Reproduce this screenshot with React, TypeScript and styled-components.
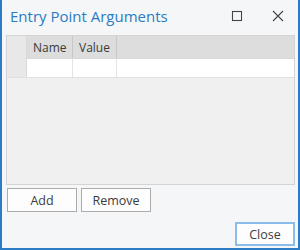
import { createGlobalStyle, styled } from 'styled-components';

const GlobalStyle = createGlobalStyle`
    html, body {
        margin: 0;
        padding: 0;
        background: #f5f6f7;
    }
    * {
        box-sizing: border-box;
    }
`;

const columns = [
    { label: 'Name', width: 46 },
    { label: 'Value', width: 44 },
];

export default function App() {
    return (
        <>
            <GlobalStyle />
            <Window>
                <TitleBar>
                    <Title>Entry Point Arguments</Title>
                    <Controls>
                        <ControlButton aria-label="Maximize">
                            <svg width="12" height="12" viewBox="0 0 12 12">
                                <rect x="1.5" y="1.5" width="9" height="9" fill="none" stroke="#444" strokeWidth="1.1" />
                            </svg>
                        </ControlButton>
                        <ControlButton aria-label="Close">
                            <svg width="12" height="12" viewBox="0 0 12 12">
                                <path d="M1 1 L11 11 M11 1 L1 11" stroke="#444" strokeWidth="1.1" />
                            </svg>
                        </ControlButton>
                    </Controls>
                </TitleBar>
                <Grid>
                    <HeaderRow>
                        <RowHeader />
                        {columns.map((col) => (
                            <HeaderCell key={col.label} $width={col.width}>
                                {col.label}
                            </HeaderCell>
                        ))}
                        <HeaderFill />
                    </HeaderRow>
                    <DataRow>
                        <RowHeader />
                        {columns.map((col) => (
                            <DataCell key={col.label} $width={col.width} />
                        ))}
                        <DataFill />
                    </DataRow>
                </Grid>
                <ButtonRow>
                    <Button>Add</Button>
                    <Button>Remove</Button>
                </ButtonRow>
                <Footer>
                    <Button $primary>Close</Button>
                </Footer>
            </Window>
        </>
    );
}

const Window = styled.div`
    width: 300px;
    height: 250px;
    display: flex;
    flex-direction: column;
    background: #f5f6f7;
    border-left: 2px solid #2b7cc4;
    border-right: 2px solid #2b7cc4;
    border-bottom: 2px solid #2b7cc4;
    padding: 0 3px 0 4px;
    font-family: 'Open Sans', 'Noto Sans', sans-serif;
`;

const TitleBar = styled.div`
    height: 35px;
    display: flex;
    align-items: center;
    justify-content: space-between;
    padding: 0 0 3px 4px;
`;

const Title = styled.h1`
    margin: 0;
    font-size: 15px;
    font-weight: 400;
    color: #2a7bc3;
`;

const Controls = styled.div`
    display: flex;
    align-items: center;
    gap: 27px;
    padding-right: 10px;
`;

const ControlButton = styled.div`
    width: 14px;
    height: 14px;
    display: flex;
    align-items: center;
    justify-content: center;
`;

const Grid = styled.div`
    height: 150px;
    background: #f0f0f0;
    border: 1px solid #d4d4d4;
    display: flex;
    flex-direction: column;
`;

const HeaderRow = styled.div`
    display: flex;
    height: 22px;
    background: #dddddd;
`;

const DataRow = styled.div`
    display: flex;
    height: 20px;
    background: #ffffff;
    border-bottom: 1px solid #e0e0e0;
`;

const RowHeader = styled.div`
    width: 20px;
    flex: none;
    background: #e8e8e8;
    border-right: 1px solid #d8d8d8;
`;

const HeaderCell = styled.div<{ $width: number }>`
    width: ${(p) => p.$width}px;
    flex: none;
    display: flex;
    align-items: center;
    padding-left: 6px;
    font-size: 12px;
    color: #3a3a3a;
    border-right: 1px solid #c8c8c8;
`;

const HeaderFill = styled.div`
    flex: 1;
`;

const DataCell = styled.div<{ $width: number }>`
    width: ${(p) => p.$width}px;
    flex: none;
    border-top: 1px solid #d8d8d8;
    border-right: 1px solid #e3e3e3;
`;

const DataFill = styled.div`
    flex: 1;
    border-top: 1px solid #d8d8d8;
`;

const ButtonRow = styled.div`
    display: flex;
    gap: 4px;
    padding: 3px 0 0 1px;
`;

const Button = styled.button<{ $primary?: boolean }>`
    width: ${(p) => (p.$primary ? 60 : 70)}px;
    height: 24px;
    background: #fdfdfd;
    border: ${(p) => (p.$primary ? '2px solid #8cbcea' : '1px solid #ababab')};
    font-family: 'Open Sans', 'Noto Sans', sans-serif;
    font-size: 12.5px;
    color: #3c3c3c;
    padding: 0;
`;

const Footer = styled.div`
    display: flex;
    justify-content: flex-end;
    padding-top: 10px;
`;
